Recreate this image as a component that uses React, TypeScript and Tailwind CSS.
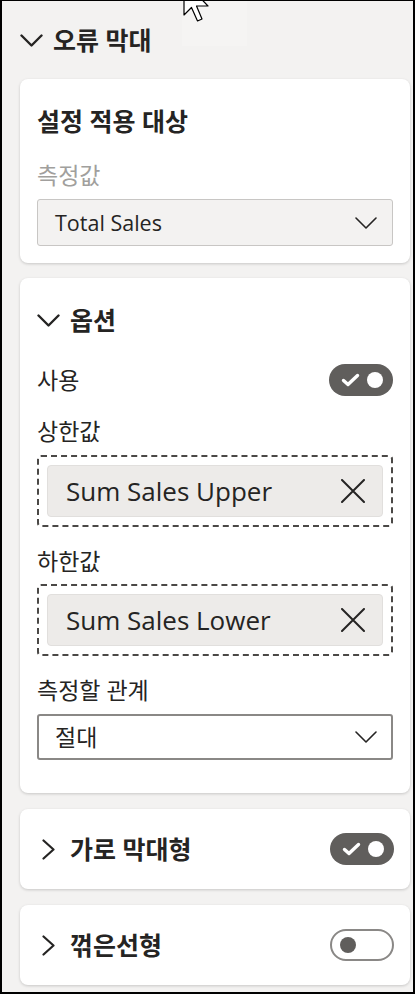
import React from "react";

const ChevronDown = () => (
  <svg width="23" height="13" viewBox="0 0 23 13" className="shrink-0">
    <path d="M1.5 1.5 L11.5 11.5 L21.5 1.5" fill="none" stroke="#252423" strokeWidth="2.4" strokeLinecap="round" strokeLinejoin="round" />
  </svg>
);

const ChevronRight = () => (
  <svg width="13" height="21" viewBox="0 0 13 21" className="shrink-0">
    <path d="M1.5 1.5 L11.5 10.5 L1.5 19.5" fill="none" stroke="#252423" strokeWidth="2.2" strokeLinecap="round" strokeLinejoin="round" />
  </svg>
);

const SmallChevron = () => (
  <svg width="22" height="12" viewBox="0 0 22 12" className="shrink-0">
    <path d="M1 1 L11 11 L21 1" fill="none" stroke="#252423" strokeWidth="1.6" strokeLinecap="round" strokeLinejoin="round" />
  </svg>
);

const XIcon = () => (
  <svg width="24" height="24" viewBox="0 0 24 24" className="shrink-0">
    <path d="M1 1 L23 23 M23 1 L1 23" fill="none" stroke="#252423" strokeWidth="2" strokeLinecap="round" />
  </svg>
);

const ToggleOn = () => (
  <div className="w-[64px] h-[32px] rounded-full bg-[#605e5c] flex items-center justify-between pl-[12px] pr-[10px] shrink-0">
    <svg width="19" height="14" viewBox="0 0 19 14">
      <path d="M2.5 7.5 L7 11.5 L16.5 2.5" fill="none" stroke="#ffffff" strokeWidth="3.4" strokeLinecap="round" strokeLinejoin="round" />
    </svg>
    <div className="w-[16px] h-[16px] rounded-full bg-white" />
  </div>
);

const ToggleOff = () => (
  <div className="w-[64px] h-[32px] rounded-full bg-white border-2 border-[#8a8886] flex items-center pl-[8px] shrink-0">
    <div className="w-[16px] h-[16px] rounded-full bg-[#605e5c]" />
  </div>
);

const Card = ({ children, className = "" }: { children: React.ReactNode; className?: string }) => (
  <div className={"bg-white rounded-[8px] shadow-[0_1px_3px_rgba(0,0,0,0.18)] " + className}>{children}</div>
);

const FieldWell = ({ text }: { text: string }) => (
  <div className="border-2 border-dashed border-[#4a4846] rounded-[4px] p-[8px]">
    <div className="h-[52px] rounded-[4px] bg-[#edebe9] border border-[#e1dfdd] flex items-center justify-between pl-[18px] pr-[17px]">
      <span className="text-[26px] text-[#252423] leading-none">{text}</span>
      <XIcon />
    </div>
  </div>
);

export default function App() {
  return (
    <div className="relative w-[415px] h-[994px] overflow-hidden bg-[#f3f2f1] border-l-2 border-r-2 border-t border-b-2 border-black font-['Open_Sans','Noto_Sans_CJK_KR',sans-serif] text-[#252423]">
      {/* faint hover area + cursor */}
      <div className="absolute left-[180px] top-0 w-[65px] h-[45px] bg-[#f5f4f3]" />
      <svg className="absolute left-[178px] top-[-1px]" width="32" height="24" viewBox="178 -1 32 24">
        <path d="M182 -20 L182 14 L189.5 6.5 L195.5 20 L200 18 L194.5 5 L206 5 Z" fill="#ffffff" stroke="#000000" strokeWidth="1.2" strokeLinejoin="round" />
      </svg>

      <div className="flex flex-col pl-[18px] pr-[3px] pt-[25px]">
        {/* Heading */}
        <div className="h-[28px] flex items-center gap-[10px]">
          <ChevronDown />
          <span className="text-[25px] font-bold leading-none">오류 막대</span>
        </div>

        {/* Card 1 */}
        <Card className="mt-[25px] px-[17px] pt-[28px] pb-[17px]">
          <div className="h-[28px] flex items-center text-[25px] font-bold leading-none">설정 적용 대상</div>
          <div className="mt-[26px] h-[28px] flex items-center text-[23px] text-[#a19f9d] leading-none">측정값</div>
          <div className="mt-[10px] h-[47px] bg-[#f3f2f1] border border-[#c8c6c4] rounded-[3px] flex items-center justify-between pl-[17px] pr-[15px]">
            <span className="text-[21.5px] leading-none">Total Sales</span>
            <SmallChevron />
          </div>
        </Card>

        {/* Card 2 */}
        <Card className="mt-[15px] px-[17px] pt-[28px] pb-[33px]">
          <div className="h-[28px] flex items-center gap-[10px]">
            <ChevronDown />
            <span className="text-[25px] font-bold leading-none">옵션</span>
          </div>
          <div className="mt-[30px] h-[32px] flex items-center justify-between">
            <span className="text-[23px] leading-none">사용</span>
            <ToggleOn />
          </div>
          <div className="mt-[21px] h-[28px] flex items-center text-[23px] leading-none">상한값</div>
          <div className="mt-[10px]">
            <FieldWell text="Sum Sales Upper" />
          </div>
          <div className="mt-[20px] h-[28px] flex items-center text-[23px] leading-none">하한값</div>
          <div className="mt-[9px]">
            <FieldWell text="Sum Sales Lower" />
          </div>
          <div className="mt-[20px] h-[28px] flex items-center text-[23px] leading-none">측정할 관계</div>
          <div className="mt-[10px] h-[46px] bg-white border-2 border-[#8a8886] rounded-[3px] flex items-center justify-between pl-[16px] pr-[14px]">
            <span className="text-[23px] leading-none">절대</span>
            <SmallChevron />
          </div>
        </Card>

        {/* Card 3 */}
        <Card className="mt-[16px] h-[80px] flex items-center justify-between pl-[22px] pr-[16px]">
          <div className="flex items-center gap-[15px]">
            <ChevronRight />
            <span className="text-[25px] font-bold leading-none">가로 막대형</span>
          </div>
          <ToggleOn />
        </Card>

        {/* Card 4 */}
        <Card className="mt-[16px] h-[80px] flex items-center justify-between pl-[22px] pr-[16px]">
          <div className="flex items-center gap-[15px]">
            <ChevronRight />
            <span className="text-[25px] font-bold leading-none">꺾은선형</span>
          </div>
          <ToggleOff />
        </Card>
      </div>
    </div>
  );
}
